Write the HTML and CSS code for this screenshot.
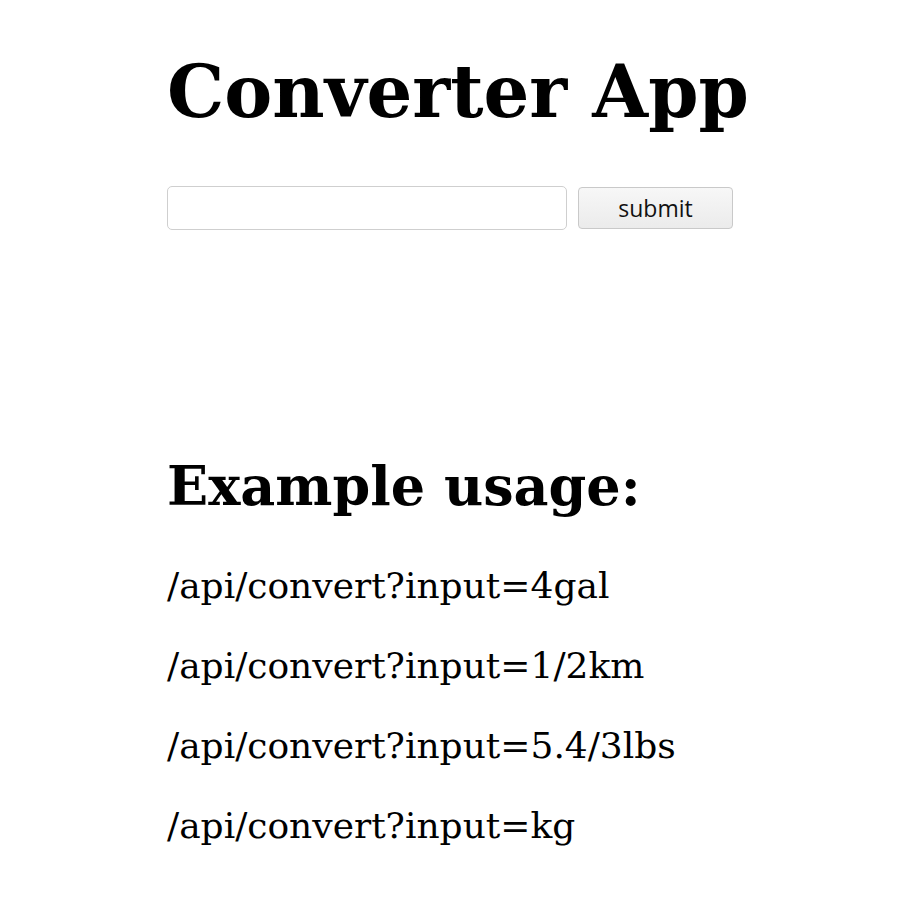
FILE: index.html
```html
<!DOCTYPE html>
<html>
<head>
<meta charset="utf-8">
<title>Converter App</title>
<link rel="stylesheet" href="styles.css">
</head>
<body>
<main class="page">
  <h1 class="title">Converter App</h1>
  <form class="form">
    <input class="field" type="text">
    <button class="submit" type="button">submit</button>
  </form>
  <h2 class="subtitle">Example usage:</h2>
  <p class="example">/api/convert?input=4gal</p>
  <p class="example">/api/convert?input=1/2km</p>
  <p class="example">/api/convert?input=5.4/3lbs</p>
  <p class="example">/api/convert?input=kg</p>
</main>
</body>
</html>
```
FILE: styles.css
```css
html, body {
  margin: 0;
  padding: 0;
  background: #ffffff;
}
body {
  font-family: "DejaVu Serif", serif;
  font-size: 36px;
  color: #000;
}
.page {
  width: 566px;
  margin: 0 auto;
  padding-top: 50px;
}
.title {
  font-size: 72px;
  font-weight: bold;
  line-height: 84px;
  white-space: nowrap;
  margin: 0 0 52px 0;
}
.form {
  display: flex;
  align-items: center;
  gap: 11px;
  margin: 0;
}
.field {
  box-sizing: border-box;
  width: 400px;
  height: 44px;
  border: 1px solid #cfcfcf;
  border-radius: 5px;
  background: #fff;
  margin: 0;
  padding: 0 8px;
}
.submit {
  box-sizing: border-box;
  width: 155px;
  height: 42px;
  border: 1px solid #c9c9c9;
  border-radius: 4px;
  background: linear-gradient(#f7f7f7, #ebebeb);
  font-family: "Open Sans", "DejaVu Sans", sans-serif;
  font-size: 23px;
  color: #111;
  margin: 0;
  padding: 0;
}
.subtitle {
  font-size: 54px;
  font-weight: bold;
  line-height: 63px;
  margin: 225px 0 47px 0;
}
.example {
  line-height: 42px;
  margin: 0 0 38px 0;
}
```
